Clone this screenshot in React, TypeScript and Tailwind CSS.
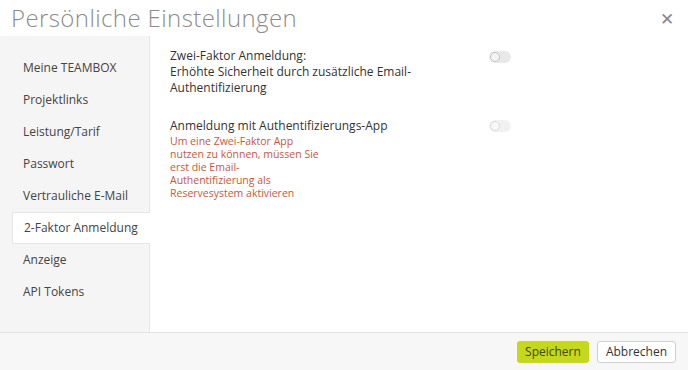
import React from 'react';

const navItems = [
  'Meine TEAMBOX',
  'Projektlinks',
  'Leistung/Tarif',
  'Passwort',
  'Vertrauliche E-Mail',
  '2-Faktor Anmeldung',
  'Anzeige',
  'API Tokens',
];

const Toggle: React.FC<{ faded?: boolean }> = ({ faded }) => (
  <div
    className={`w-[22px] h-[12px] rounded-full bg-[#e9e9e9] flex items-center px-[1px] ${
      faded ? 'opacity-60' : ''
    }`}
  >
    <div className="w-[10px] h-[10px] rounded-full bg-[#f4f4f4] border border-[#c4c4c4]" />
  </div>
);

export default function App() {
  return (
    <div
      className="w-[688px] h-[370px] bg-white flex flex-col overflow-hidden"
      style={{ fontFamily: '"Open Sans", "DejaVu Sans", sans-serif' }}
    >
      {/* Header */}
      <div className="h-[36px] flex items-center justify-between pl-[11px] pr-[14px] shrink-0">
        <h1 className="text-[24px] font-light text-[#8c8c8c] tracking-[0.4px] leading-none">
          Persönliche Einstellungen
        </h1>
        <span className="text-[#888] text-[17px] leading-none font-light">✕</span>
      </div>

      {/* Body */}
      <div className="flex flex-1 min-h-0">
        <div className="w-[150px] shrink-0 bg-[#f5f5f5] border-r border-[#e6e6e6] pt-4">
          {navItems.map((item) => {
            const active = item === '2-Faktor Anmeldung';
            return (
              <div
                key={item}
                className={`h-8 ml-3 -mr-px pl-[11px] flex items-center text-[12px] text-[#444] ${
                  active ? 'bg-white border-y border-l border-[#e6e6e6]' : ''
                }`}
              >
                {item}
              </div>
            );
          })}
        </div>

        <div className="flex-1 pl-5 pt-[12px]">
          <div className="flex">
            <div className="w-[319px] text-[12px] leading-[16px] text-[#333]">
              Zwei-Faktor Anmeldung:
              <br />
              Erhöhte Sicherheit durch zusätzliche Email-
              <br />
              Authentifizierung
            </div>
            <div className="pt-[3px]">
              <Toggle />
            </div>
          </div>

          <div className="flex mt-[22px]">
            <div className="w-[319px]">
              <div className="text-[12px] leading-[16px] text-[#333]">
                Anmeldung mit Authentifizierungs-App
              </div>
              <div className="text-[10.5px] leading-[13px] text-[#c9573c] mt-[1px]">
                Um eine Zwei-Faktor App
                <br />
                nutzen zu können, müssen Sie
                <br />
                erst die Email-
                <br />
                Authentifizierung als
                <br />
                Reservesystem aktivieren
              </div>
            </div>
            <div className="pt-[2px]">
              <Toggle faded />
            </div>
          </div>
        </div>
      </div>

      {/* Footer */}
      <div className="h-[38px] shrink-0 border-t border-[#e3e3e3] bg-[#f7f7f7] flex items-center justify-end gap-2 pr-3">
        <button className="h-[22px] px-[8px] rounded-[3px] bg-[#c6d81c] text-[12px] text-[#3d4a00]">
          Speichern
        </button>
        <button className="h-[22px] px-[8px] rounded-[3px] bg-white border border-[#cfcfcf] text-[12px] text-[#333]">
          Abbrechen
        </button>
      </div>
    </div>
  );
}
